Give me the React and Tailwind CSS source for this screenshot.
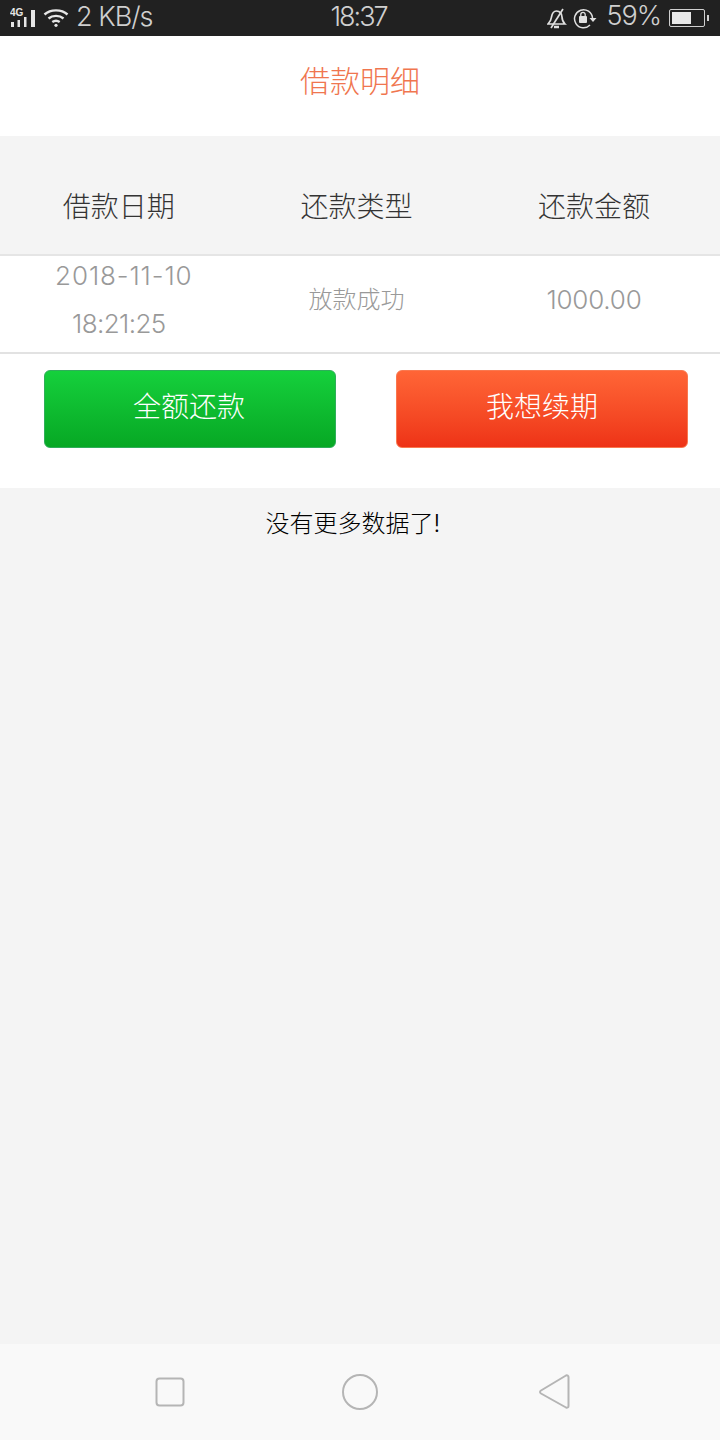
const cjk = "font-['Inter','Noto_Sans_CJK_SC',sans-serif] font-light";

function StatusBar() {
  return (
    <div className="flex h-9 items-center bg-[#212121] text-[#cfcfcf]">
      <div className="flex w-[240px] items-center pl-[10px]">
        <svg width="28" height="24" viewBox="0 0 28 24" className="mr-[5px]" fill="#e6e6e6">
          <text x="0" y="10" fontSize="10" fontWeight="700" fontFamily="Liberation Sans">4G</text>
          <rect x="1" y="16" width="3" height="5" />
          <rect x="7.500" y="14" width="2.500" height="7" />
          <rect x="14" y="11" width="2.500" height="10" />
          <rect x="21" y="4" width="4" height="17" />
        </svg>
        <svg width="26" height="20" viewBox="0 0 26 20" fill="none" stroke="#e6e6e6" strokeWidth="2.400">
          <path d="M1.500 6.500C7.500 1 18.500 1 24.500 6.500" />
          <path d="M5.500 10.500C9.500 7 16.500 7 20.500 10.500" />
          <path d="M9.300 14C11.500 12.400 14.500 12.400 16.700 14" />
          <circle cx="13" cy="17.300" r="1.600" fill="#e6e6e6" stroke="none" />
        </svg>
        <span className="mb-[3px] ml-[7px] font-['Inter',sans-serif] text-[27px] leading-[30px] font-light tracking-[-1px]">2 KB/s</span>
      </div>
      <div className="mb-[3px] w-[240px] pr-[3px] text-center font-['Inter',sans-serif] text-[27px] leading-[30px] font-light tracking-[-2px]">18:37</div>
      <div className="flex flex-1 items-center justify-end pr-[11px]">
        <svg width="20" height="22" viewBox="0 0 20 22" fill="none" stroke="#e0e0e0" strokeWidth="1.700" className="mr-[6px]">
          <path d="M1 17h17c-2-2-3-3.500-3-7 0-3-2-6-5.500-6S5 7 4.500 10c-.3 3-1.500 5-3.500 7Z" />
          <path d="M16 2 4 21" />
          <path d="M7 20h5" strokeWidth="2.500" />
        </svg>
        <svg width="24" height="22" viewBox="0 0 24 22" fill="none" stroke="#e0e0e0" strokeWidth="1.500" className="mr-[9px]">
          <path d="M19.500 11a9 9 0 1 0-2.500 7" />
          <path d="M16.500 11h7l-3.500 4Z" fill="#e0e0e0" stroke="none" />
          <rect x="6" y="9" width="8" height="7" rx="1" fill="#e0e0e0" stroke="none" />
          <path d="M7.800 9V7.500a2.200 2.200 0 0 1 4.400 0V9" strokeWidth="1.300" />
        </svg>
        <span className="mr-[8px] mb-[5px] font-['Inter',sans-serif] text-[27px] leading-[30px] font-light tracking-[-1px]">59%</span>
        <div className="flex h-[18px] w-[36px] items-center rounded-[2px] border border-[#d0d0d0] p-[2px]">
          <div className="h-full w-[19px] bg-[#e8e8e8]" />
        </div>
        <div className="ml-[2px] h-[6px] w-[2px] bg-[#d0d0d0]" />
      </div>
    </div>
  );
}

function Cell({ children }) {
  return <div className="w-[33%] text-center">{children}</div>;
}

export default function App() {
  return (
    <div className={`flex h-[1440px] w-[720px] flex-col overflow-hidden bg-[#f4f4f4] ${cjk}`}>
      <StatusBar />
      <div className="flex h-[100px] items-center justify-center bg-white pb-[10px] text-[30px] text-[#f0764f]">借款明细</div>
      <div className="flex h-[120px] items-center border-b-2 border-[#e5e5e5] pt-[24px] text-[28px] text-[#333333]">
        <Cell>借款日期</Cell>
        <Cell>还款类型</Cell>
        <Cell>还款金额</Cell>
      </div>
      <div className="flex h-[98px] items-center border-b-2 border-[#e2e2e2] bg-white pb-[9px] text-[#999999]">
        <Cell>
          <div className="pl-[10px] text-[26px] leading-[48px] tracking-[0.9px]">2018-11-10</div>
          <div className="text-[26px] leading-[48px] tracking-[-0.6px]">18:21:25</div>
        </Cell>
        <Cell><span className="text-[24px]">放款成功</span></Cell>
        <Cell><span className="text-[26px] tracking-[-0.2px]">1000.00</span></Cell>
      </div>
      <div className="flex h-[134px] justify-between bg-white pt-[16px] pr-[32px] pl-[44px]">
        <div className="flex h-[78px] w-[292px] items-center justify-center rounded-[6px] border border-[#2fae5a] bg-linear-to-b from-[#15d03c] to-[#07a824] pr-[2px] pb-[4px] text-[28px] text-white">全额还款</div>
        <div className="flex h-[78px] w-[292px] items-center justify-center rounded-[6px] border border-[#f9784f] bg-linear-to-b from-[#ff6536] to-[#ee3216] pb-[4px] text-[28px] text-white">我想续期</div>
      </div>
      <div className="flex h-[72px] items-center justify-center pr-[14px] text-[24px] text-black">没有更多数据了!</div>
      <div className="flex-1" />
      <div className="flex h-[96px] items-center bg-[#f9f9f9] pb-[1px] pl-[155px]">
        <svg width="30" height="30" viewBox="0 0 30 30" fill="none" stroke="#b5b5b5" strokeWidth="2" className="mr-[157px]">
          <rect x="1.500" y="1.500" width="27" height="27" rx="3" />
        </svg>
        <svg width="36" height="36" viewBox="0 0 36 36" fill="none" stroke="#b5b5b5" strokeWidth="2" className="mr-[160px]">
          <circle cx="18" cy="18" r="17" />
        </svg>
        <svg width="32" height="36" viewBox="0 0 32 36" fill="none" stroke="#b5b5b5" strokeWidth="2" strokeLinejoin="round">
          <path d="M28 1.500c1.300-.6 2.500.2 2.500 1.500v29c0 1.400-1.300 2.100-2.500 1.500L3 19.500c-1.300-.8-1.300-2.200 0-3Z" />
        </svg>
      </div>
    </div>
  );
}
